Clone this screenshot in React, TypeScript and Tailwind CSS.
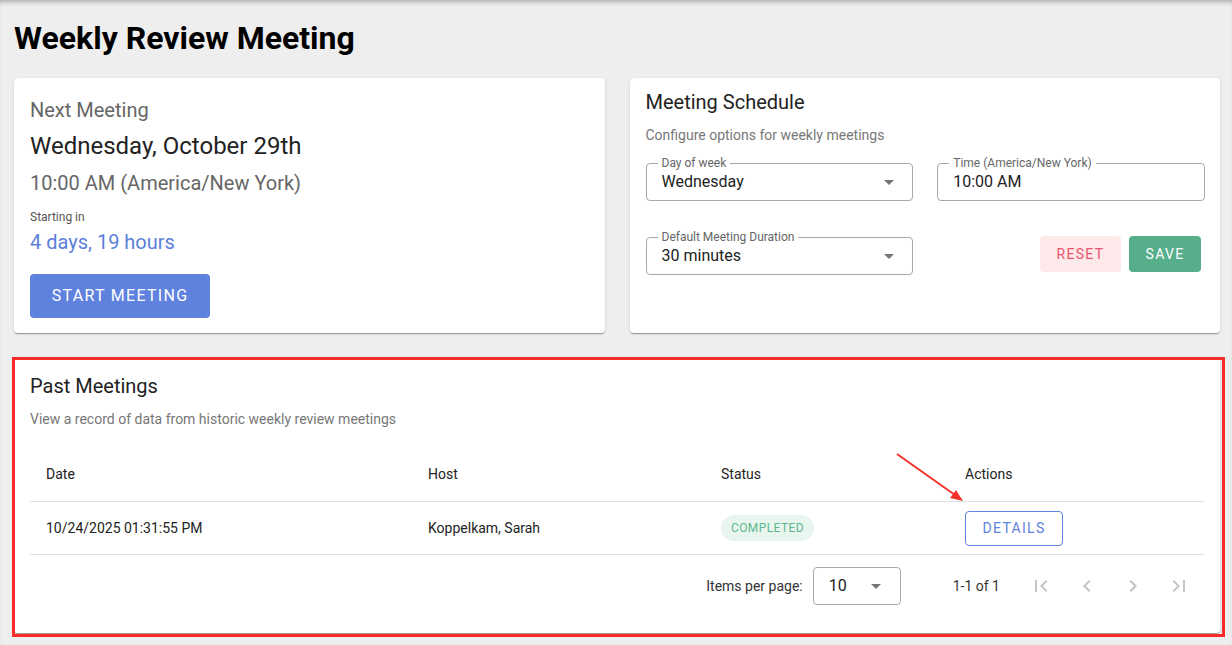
import React from 'react';

// Weekly review meeting page — cards + past meetings table

const font = { fontFamily: 'Roboto, "Liberation Sans", sans-serif' };

function Card({ className = '', children }: { className?: string; children: React.ReactNode }) {
  return (
    <div
      className={`bg-white rounded-[4px] shadow-[0_2px_1px_-1px_rgba(0,0,0,0.2),0_1px_1px_0_rgba(0,0,0,0.14),0_1px_3px_0_rgba(0,0,0,0.12)] ${className}`}
    >
      {children}
    </div>
  );
}

function Caret() {
  return (
    <svg width="10" height="5" viewBox="0 0 10 5" className="shrink-0">
      <path d="M0 0L5 5L10 0z" fill="#757575" />
    </svg>
  );
}

function OutlinedField({ label, value, select = false }: { label: string; value: string; select?: boolean }) {
  return (
    <div className="relative h-[38px] border border-[#a8a8a8] rounded-[4px] flex items-center pl-[15px] pr-[18px]">
      <span className="absolute left-[11px] -top-[9px] bg-white px-[4px] text-[12px] leading-[16px] text-[#666]">
        {label}
      </span>
      <span className="flex-1 text-[16px] text-[#222]">{value}</span>
      {select && <Caret />}
    </div>
  );
}

const PAGE_ICONS = [
  'M18.41 16.59L13.82 12l4.59-4.59L17 6l-6 6 6 6zM6 6h2v12H6z',
  'M15.41 7.41L14 6l-6 6 6 6 1.41-1.41L10.83 12z',
  'M10 6L8.59 7.41 13.17 12l-4.58 4.59L10 18l6-6z',
  'M5.59 7.41L10.18 12l-4.59 4.59L7 18l6-6-6-6zM16 6h2v12h-2z',
];

export default function App() {
  return (
    <div
      className="relative min-h-screen bg-[#eeeeee] pl-[14px] pr-[12px] pt-[18px] shadow-[inset_0_5px_5px_-3px_rgba(0,0,0,0.28)]"
      style={font}
    >
      <h1 className="text-[32px] leading-[40px] font-bold text-black">Weekly Review Meeting</h1>

      <div className="grid grid-cols-2 gap-[25px] mt-[20px]">
        {/* Next meeting */}
        <Card className="h-[255px] px-4 pt-[18px]">
          <div className="text-[20px] leading-[28px] text-[#666]">Next Meeting</div>
          <div className="text-[24px] leading-[32px] text-[#222] mt-[6px]">Wednesday, October 29th</div>
          <div className="text-[20px] leading-[28px] text-[#666] mt-[7px]">10:00 AM (America/New York)</div>
          <div className="text-[12px] leading-[16px] text-[#555] mt-[12px]">Starting in</div>
          <div className="text-[20px] leading-[28px] text-[#5b7fd9] mt-[3px]">4 days, 19 hours</div>
          <button className="mt-[18px] h-[44px] w-[180px] rounded-[4px] bg-[#5f82de] text-white text-[16px] tracking-[1.3px]">
            START MEETING
          </button>
        </Card>

        {/* Meeting schedule */}
        <Card className="h-[255px] pl-4 pr-[15px] pt-[10px]">
          <div className="text-[20px] leading-[28px] text-[#222]">Meeting Schedule</div>
          <div className="text-[14px] leading-[20px] text-[#777] mt-[9px]">Configure options for weekly meetings</div>
          <div className="grid grid-cols-2 gap-x-6 gap-y-9 mt-[18px]">
            <OutlinedField label="Day of week" value="Wednesday" select />
            <OutlinedField label="Time (America/New York)" value="10:00 AM" />
            <OutlinedField label="Default Meeting Duration" value="30 minutes" select />
            <div className="flex justify-end items-start gap-2 pr-[4px] -mt-[1px]">
              <button className="h-[36px] w-[81px] rounded-[4px] bg-[#fde8ea] text-[#e9566b] text-[14px] tracking-[1.3px]">
                RESET
              </button>
              <button className="h-[36px] w-[72px] rounded-[4px] bg-[#56ae8b] text-white text-[14px] tracking-[1.3px]">
                SAVE
              </button>
            </div>
          </div>
        </Card>
      </div>

      {/* Past meetings */}
      <Card className="mt-[24px] h-[276px] px-4 pt-[15px]">
        <div className="text-[20px] leading-[28px] text-[#222]">Past Meetings</div>
        <div className="text-[14px] leading-[20px] text-[#777] mt-[9px]">
          View a record of data from historic weekly review meetings
        </div>

        <div className="mt-[18px] text-[14px] text-[#222]">
          <div className="grid grid-cols-[382px_293px_244px_1fr] h-[55px] items-center border-b border-[#e0e0e0]">
            <div className="px-4">Date</div>
            <div className="px-4">Host</div>
            <div className="px-4">Status</div>
            <div className="px-4">Actions</div>
          </div>
          <div className="grid grid-cols-[382px_293px_244px_1fr] h-[53px] items-center border-b border-[#e0e0e0]">
            <div className="px-4">10/24/2025 01:31:55 PM</div>
            <div className="px-4">Koppelkam, Sarah</div>
            <div className="px-4">
              <span className="inline-flex items-center h-[26px] px-[10px] rounded-full bg-[#e9f5ef] text-[#5cb88e] text-[12px] tracking-[0.4px]">
                COMPLETED
              </span>
            </div>
            <div className="px-4">
              <button className="h-[35px] w-[98px] rounded-[4px] border border-[#5f82de] text-[#5f82de] text-[14px] tracking-[1.3px]">
                DETAILS
              </button>
            </div>
          </div>

          <div className="flex justify-end items-center h-[62px] pr-[5px] text-[#333]">
            <span>Items per page:</span>
            <div className="ml-[10px] h-[38px] w-[88px] border border-[#a8a8a8] rounded-[4px] flex items-center pl-[15px] pr-[19px]">
              <span className="flex-1 text-[16px] text-[#222]">10</span>
              <Caret />
            </div>
            <span className="ml-[52px]">1-1 of 1</span>
            <div className="ml-[21px] flex gap-[6px]">
              {PAGE_ICONS.map((d, i) => (
                <div key={i} className="w-[40px] h-[40px] flex items-center justify-center">
                  <svg width="24" height="24" viewBox="0 0 24 24">
                    <path d={d} fill="#c4c4c4" />
                  </svg>
                </div>
              ))}
            </div>
          </div>
        </div>
      </Card>

      {/* annotation: red box + arrow */}
      <div className="absolute left-[12px] top-[357px] w-[1213px] h-[280px] border-[3px] border-[#fb2a2a] pointer-events-none" />
      <svg className="absolute left-0 top-0 pointer-events-none" width="1232" height="645">
        <line x1="897" y1="454" x2="955" y2="495" stroke="#f3322b" strokeWidth="2" />
        <path d="M963 501L950 498L956 490z" fill="#f3322b" />
      </svg>
    </div>
  );
}
